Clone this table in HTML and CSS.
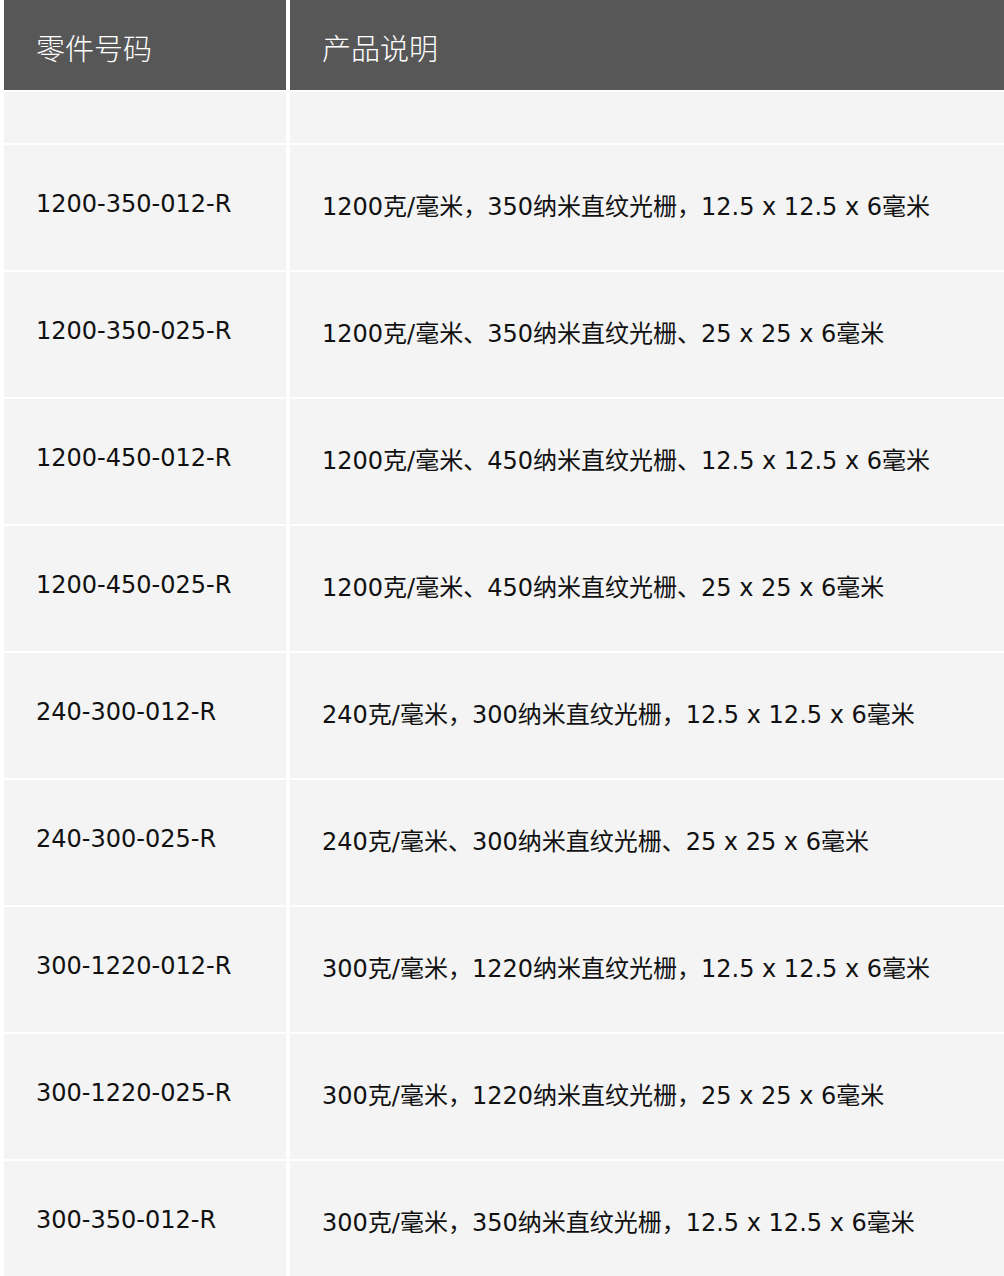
FILE: index.html
```html
<!DOCTYPE html>
<html lang="zh">
<head>
<meta charset="utf-8">
<link rel="stylesheet" href="styles.css">
</head>
<body>
<div class="table">
  <div class="th">零件号码</div>
  <div class="th">产品说明</div>
  <div class="td spacer"></div>
  <div class="td spacer"></div>
  <div class="td">1200-350-012-R</div>
  <div class="td">1200克/毫米，350纳米直纹光栅，12.5 x 12.5 x 6毫米</div>
  <div class="td">1200-350-025-R</div>
  <div class="td">1200克/毫米、350纳米直纹光栅、25 x 25 x 6毫米</div>
  <div class="td">1200-450-012-R</div>
  <div class="td">1200克/毫米、450纳米直纹光栅、12.5 x 12.5 x 6毫米</div>
  <div class="td">1200-450-025-R</div>
  <div class="td">1200克/毫米、450纳米直纹光栅、25 x 25 x 6毫米</div>
  <div class="td">240-300-012-R</div>
  <div class="td">240克/毫米，300纳米直纹光栅，12.5 x 12.5 x 6毫米</div>
  <div class="td">240-300-025-R</div>
  <div class="td">240克/毫米、300纳米直纹光栅、25 x 25 x 6毫米</div>
  <div class="td">300-1220-012-R</div>
  <div class="td">300克/毫米，1220纳米直纹光栅，12.5 x 12.5 x 6毫米</div>
  <div class="td">300-1220-025-R</div>
  <div class="td">300克/毫米，1220纳米直纹光栅，25 x 25 x 6毫米</div>
  <div class="td">300-350-012-R</div>
  <div class="td">300克/毫米，350纳米直纹光栅，12.5 x 12.5 x 6毫米</div>
</div>
</body>
</html>
```
FILE: styles.css
```css
html, body {
  margin: 0;
  padding: 0;
  background: #ffffff;
}
body {
  overflow: hidden;
}
.table {
  display: grid;
  grid-template-columns: 282px 714px;
  grid-auto-rows: 125px;
  grid-template-rows: 90px 51px;
  column-gap: 4px;
  row-gap: 2px;
  padding-left: 4px;
}
.th {
  background: #575757;
  color: #ffffff;
  font-family: "Noto Sans CJK SC", sans-serif;
  font-weight: 300;
  font-size: 29px;
  display: flex;
  align-items: center;
  padding-left: 32px;
  padding-top: 4px;
}
.td {
  background: #f4f4f4;
  color: #111111;
  font-family: "DejaVu Sans", "Noto Sans CJK SC", sans-serif;
  font-size: 24px;
  display: flex;
  align-items: center;
  padding-left: 32px;
  padding-bottom: 7px;
  white-space: nowrap;
}
.spacer {
  padding-bottom: 0;
}
```
